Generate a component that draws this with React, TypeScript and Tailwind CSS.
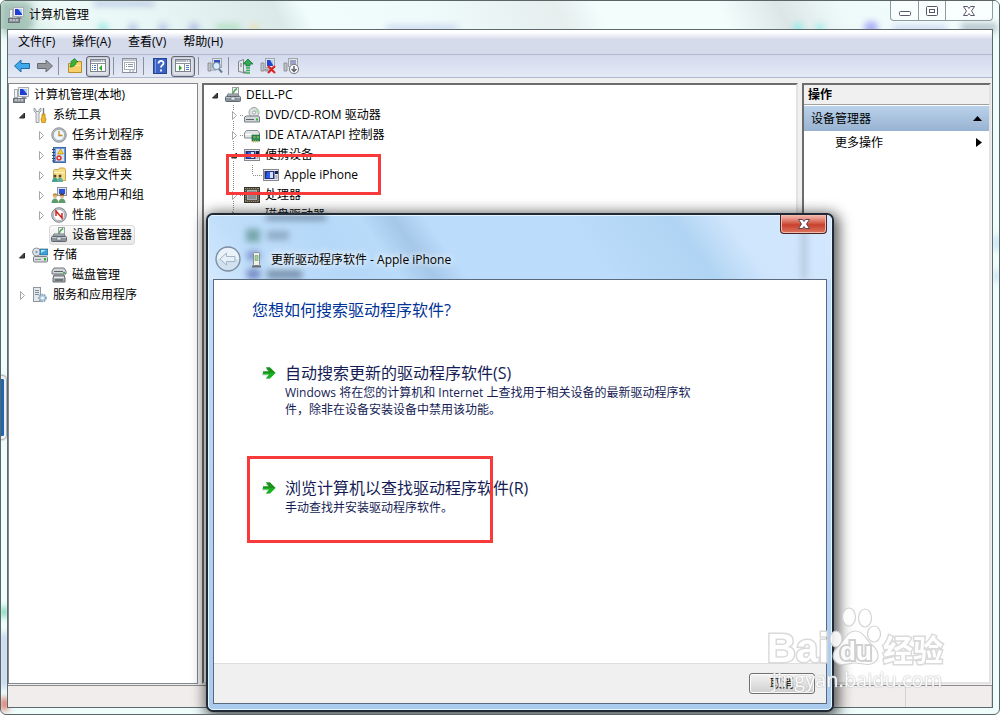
import type { ReactNode } from "react";

type IconProps = { name: string };

function MonitorPc() {
  return (
    <>
      <rect x="5.5" y="0.5" width="10" height="9" fill="#eceef1" stroke="#a9aeb6" />
      <rect x="7" y="2" width="7" height="6" fill="#1f3fd0" />
      <path d="M10 2h4v5z" fill="#a9cbfa" />
      <path d="M9 10h4l1 2H8z" fill="#8b9098" />
      <rect x="1.5" y="2.5" width="3" height="8" fill="#eef0f2" stroke="#a9adb3" />
      <rect x="0.5" y="11.5" width="11" height="4" fill="#8d949b" stroke="#6a7178" />
      <path d="M2 13h2M5 13h2M8 13h2" stroke="#e6eaee" />
    </>
  );
}

function Person({ x, hair }: { x: number; hair: string }) {
  return (
    <>
      <circle cx={x} cy="9" r="2.2" fill="#e9b98a" />
      <path d={`M${x - 2.3} 8.6a2.3 2.3 0 0 1 4.6 0z`} fill={hair} />
      <path d={`M${x - 3.5} 16c0-6 7-6 7 0z`} fill="#5f9a6b" />
    </>
  );
}

function Chassis() {
  return (
    <>
      <rect x="7.5" y="0.5" width="6" height="7" fill="#f2f4f5" stroke="#9aa1a8" />
      <path d="M8 6.5c1-3 2-4 4-5" stroke="#4aa84a" strokeWidth="1.4" fill="none" />
      <path d="M2 9l1-2h10l1 2z" fill="#c5cace" stroke="#6f7780" />
      <rect x="0.5" y="9.5" width="15" height="5" rx="1" fill="#8c959d" stroke="#5f676f" />
      <path d="M1 10.5h14" stroke="#c3c9ce" />
      <rect x="6" y="10" width="4" height="3" fill="#e8ebee" stroke="#676f77" strokeWidth="0.6" />
    </>
  );
}

function WindowPane({ arrow }: { arrow: "left" | "right" }) {
  return (
    <>
      <rect x="0.5" y="1.5" width="15" height="12" fill="#fff" stroke="#7d838c" />
      <path d="M1 3h14" stroke="#b3b9c2" strokeWidth="2" />
      <path d="M11 3h1M13 3h1" stroke="#fff" />
      <path d="M1 5.5h14" stroke="#8a9099" />
      {arrow === "left" ? (
        <>
          <path d="M7.5 6v7" stroke="#8a9099" />
          <path d="M2 7.5h1M4 7.5h2M2 9.5h1M4 9.5h2M2 11.5h1M4 11.5h2" stroke="#4d7bb8" />
          <path d="M12 7v6l-3-3z" fill="#28a428" />
        </>
      ) : (
        <>
          <path d="M9.5 6v7" stroke="#8a9099" />
          <path d="M11 7.5h3M11 9.5h3M11 11.5h3" stroke="#4d7bb8" />
          <path d="M4 7v6l3-3z" fill="#28a428" />
        </>
      )}
    </>
  );
}

const drawings: Record<string, ReactNode> = {
  computer: <MonitorPc />,
  chassis: <Chassis />,
  paneLeft: <WindowPane arrow="left" />,
  paneRight: <WindowPane arrow="right" />,
  portable: (
    <>
      <rect x="0.5" y="2.5" width="15" height="11" fill="#e6e8ec" stroke="#85888f" />
      <rect x="1.5" y="4" width="10" height="8" fill="#28307a" />
      <path d="M4 5h5l-2 6H3z" fill="#2a5cf0" />
      <path d="M7 5h3v6H7z" fill="#cfe2ff" />
      <rect x="12" y="4" width="3" height="3" fill="#17204f" />
      <path d="M12.5 9h2M12.5 11h2" stroke="#7b7e87" />
    </>
  ),
  tools: (
    <>
      <path d="M2 1v3l2 2v9.5h3V6l2-2V1L7 2.5v2H4v-2z" fill="#e4e6e8" stroke="#8b9095" strokeWidth="0.8" />
      <path d="M11.5 1v6" stroke="#777c82" strokeWidth="1.4" />
      <path d="M10 7h3v3l1 2-1 4h-3l-1-4 1-2z" fill="#f1b52b" stroke="#b07c10" strokeWidth="0.7" />
    </>
  ),
  clock: (
    <>
      <circle cx="8" cy="8" r="7.3" fill="#b9bdc2" stroke="#7f858c" strokeWidth="0.8" />
      <circle cx="8" cy="8" r="5.6" fill="#eef6fc" stroke="#8d949b" strokeWidth="0.6" />
      <path d="M8 4v4.5h3.5" stroke="#c8871c" strokeWidth="1.3" fill="none" />
    </>
  ),
  events: (
    <>
      <rect x="2.5" y="0.5" width="12" height="15" fill="#6f97d2" stroke="#3f69a6" />
      <rect x="5" y="2" width="8" height="12" fill="#d5e4f7" />
      <path d="M1 2.5h3M1 5.5h3M1 8.5h3M1 11.5h3M1 14h3" stroke="#30486c" />
      <path d="M9.5 2l3 5h-6z" fill="#fbd02e" stroke="#a8830c" strokeWidth="0.6" />
      <circle cx="8" cy="11" r="2.7" fill="#d83a34" />
      <path d="M7 10l2 2M9 10l-2 2" stroke="#fff" strokeWidth="0.8" />
    </>
  ),
  shared: (
    <>
      <path d="M2.500 3.500l1-1h4l1-1.500h5l1 1.500v11h-12z" fill="#f6dd88" stroke="#c9a74a" />
      <path d="M3 5.5h11" stroke="#fff3c4" />
      <circle cx="4" cy="9" r="1.5" fill="#5e4630" />
      <circle cx="9" cy="9" r="1.5" fill="#5e4630" />
      <path d="M1 15c0-6 6-6 6 0z" fill="#4b9d8e" />
      <path d="M6 15c0-6 6-6 6 0z" fill="#5fae9f" />
    </>
  ),
  users: (
    <>
      <rect x="6.5" y="0.5" width="9" height="8" fill="#dde2ea" stroke="#8c93a0" />
      <rect x="8" y="2" width="6" height="5" fill="#2c52d8" />
      <Person x={4} hair="#c98a34" />
      <Person x={11} hair="#54402c" />
    </>
  ),
  gauge: (
    <>
      <circle cx="8" cy="8" r="7.3" fill="#c9cccf" stroke="#74797f" strokeWidth="0.9" />
      <circle cx="8" cy="8" r="5.5" fill="#fff" stroke="#8a8f95" strokeWidth="0.6" />
      <path d="M5 9V4l6 7V6" stroke="#d2221c" strokeWidth="1.5" fill="none" />
    </>
  ),
  storage: (
    <>
      <circle cx="4.5" cy="5" r="4" fill="#dfe3e8" stroke="#8d9399" />
      <circle cx="4.5" cy="5" r="1.2" fill="#7da0b8" />
      <rect x="8" y="2" width="8" height="6" fill="#3aa3dc" stroke="#257" strokeWidth="0.6" />
      <path d="M9 3h5l-5 3z" fill="#b4e2fa" />
      <rect x="1.5" y="9.5" width="14" height="5.5" rx="1" fill="#d9dcdf" stroke="#7c8288" />
      <path d="M3 12.5h6" stroke="#8b9197" />
      <rect x="12" y="11" width="2" height="2.5" fill="#2eb82e" />
    </>
  ),
  disks: (
    <>
      <path d="M3 1h10l2 3v3H1V4z" fill="#d3d6d9" stroke="#70757a" />
      <path d="M3 4.5h9" stroke="#5d6267" />
      <path d="M3 8h10l1 3v4H2v-4z" fill="#a9aeb3" stroke="#63686d" />
      <path d="M3 10.5h10" stroke="#eee" />
      <rect x="4" y="12" width="8" height="2" fill="#6d7277" />
      <rect x="12" y="5" width="2" height="1.5" fill="#39b54a" />
    </>
  ),
  services: (
    <>
      <rect x="1.5" y="0.5" width="7" height="14" fill="#e4e8ec" stroke="#8e979f" />
      <path d="M3 3.5h4M3 5.5h4M3 7.5h4" stroke="#7b8d9c" />
      <circle cx="10.5" cy="11" r="3.5" fill="#b3cde0" stroke="#7c9db6" strokeWidth="1.6" strokeDasharray="1.5 1" />
      <circle cx="10.5" cy="11" r="1.3" fill="#fff" />
    </>
  ),
  disc: (
    <>
      <circle cx="10" cy="5.5" r="5" fill="#dfe2e5" stroke="#9a9fa4" />
      <path d="M10 5.5l3-4a5 5 0 0 1 2 4z" fill="#b5dcb5" />
      <circle cx="10" cy="5.5" r="1.5" fill="#fff" stroke="#888" strokeWidth="0.7" />
      <path d="M0.500 10l2-1h12l1 1v5h-15z" fill="#d5d8db" stroke="#777d83" />
      <path d="M2 12.5h8" stroke="#5f656b" />
      <rect x="12" y="11.5" width="2" height="2" fill="#2eb82e" />
    </>
  ),
  ide: (
    <>
      <path d="M0.500 6l2-2.500h11l2 2.500v5h-15z" fill="#e2e4e6" stroke="#878c91" />
      <path d="M1 7.5h14" stroke="#fff" />
      <rect x="8" y="8" width="8" height="6" fill="#2f8f55" stroke="#1c5f37" strokeWidth="0.7" />
      <path d="M9.5 10h2M13 10h2M9.5 13.5v2M11.5 13.5v2M13.5 13.5v2" stroke="#d9c36a" />
    </>
  ),
  cpu: (
    <>
      <rect x="0.5" y="0.5" width="15" height="15" fill="#57524a" stroke="#38342f" />
      <path d="M1 1.500h14M1 14.500h14M1.500 1v14M14.500 1v14" stroke="#a08f60" strokeDasharray="1 1" />
      <rect x="3.5" y="3.5" width="9" height="9" fill="#8c8f92" stroke="#aeb0b2" />
    </>
  ),
  none: null,
  back: <path d="M0.500 8L7 2v3.500h8.500v5H7V14z" fill="#3fa9ea" stroke="#1d6ca8" strokeLinejoin="round" />,
  forward: <path d="M15.500 8L9 2v3.500H0.500v5H9V14z" fill="#94989d" stroke="#686c71" strokeLinejoin="round" />,
  folderUp: (
    <>
      <path d="M1.500 5.500h6l1-2h6v11h-13z" fill="#f4cf6a" stroke="#b98f2c" />
      <path d="M2 7.5h12" stroke="#fbe6a5" />
      <path d="M3 9c0-3 2-3 2-5H3.500L7.500 0.500 11 4H9c0 3-2 5-6 5z" fill="#35b535" stroke="#1f7d1f" strokeWidth="0.7" />
    </>
  ),
  properties: (
    <>
      <rect x="0.5" y="0.5" width="14" height="14" fill="#fafbfc" stroke="#8b9097" />
      <path d="M1 2h13" stroke="#c2c8cf" strokeWidth="2" />
      <rect x="2.5" y="4.5" width="10" height="7" fill="#fff" stroke="#a8b0ba" />
      <path d="M4 6.5h1M6 6.5h5M4 8.5h1M6 8.5h5M7 13h2M10 13h2" stroke="#8896a8" />
    </>
  ),
  help: (
    <>
      <rect x="1.5" y="0.5" width="13" height="15" fill="#3c63c4" stroke="#254590" />
      <path d="M3.5 1v14" stroke="#7d9be4" />
      <path d="M6.5 5.5c0-3.500 5.500-3.500 5 0-.2 1.700-2.500 1.800-2.500 4M9 11.500v2" stroke="#fff" strokeWidth="1.8" fill="none" />
    </>
  ),
  scan: (
    <>
      <rect x="5.5" y="0.5" width="9" height="9" fill="#e1e4e8" stroke="#a1a6ad" />
      <rect x="7" y="2" width="6" height="6" fill="#3050c8" />
      <path d="M1 5v8h3V5zM5 12h4" fill="#bfc4c9" stroke="#81878e" strokeWidth="0.8" />
      <circle cx="9.5" cy="8" r="3.5" fill="#d8ecfb" stroke="#7e92a8" strokeWidth="1.2" />
      <path d="M12 11l3 3.5" stroke="#6a7f97" strokeWidth="2" />
    </>
  ),
  update: (
    <>
      <path d="M1.500 3.500l5-2v13l-5-1z" fill="#e6e8ea" stroke="#80868c" />
      <path d="M3 6h2M3 8h2" stroke="#737a81" />
      <path d="M6 14.5h3" stroke="#808080" strokeWidth="2" />
      <path d="M11 1l5 5h-3v2H9V6H6z" fill="#2fab53" stroke="#16743a" strokeWidth="0.8" />
      <path d="M9 10h4M9 12.5h4M9 15h4" stroke="#2fab53" strokeWidth="1.5" />
    </>
  ),
  uninstall: (
    <>
      <rect x="5.5" y="0.5" width="9" height="9" fill="#e1e4e8" stroke="#a1a6ad" />
      <rect x="7" y="2" width="6" height="6" fill="#2444cc" />
      <path d="M10 2h3v5z" fill="#a9cbfa" />
      <path d="M1 5v8h3V5zM5 11h4l1 2H5z" fill="#bfc4c9" stroke="#81878e" strokeWidth="0.8" />
      <path d="M8 8l7 7M15 8l-7 7" stroke="#e01f1f" strokeWidth="2" />
    </>
  ),
  disable: (
    <>
      <rect x="5.5" y="0.5" width="9" height="8" fill="#e1e4e8" stroke="#a1a6ad" />
      <rect x="7" y="2" width="6" height="5" fill="#9ba2c4" />
      <path d="M1 5v8h3V5z" fill="#bfc4c9" stroke="#81878e" strokeWidth="0.8" />
      <circle cx="11" cy="11" r="4.5" fill="#fff" stroke="#7b8086" strokeWidth="1.1" />
      <path d="M11 8v5M8.5 11l2.500 2.500 2.500-2.500" stroke="#5f646a" strokeWidth="1.5" fill="none" />
    </>
  ),
};

function Icon({ name }: IconProps) {
  return (
    <svg className="size-4 shrink-0" viewBox="0 0 16 16" aria-hidden="true">
      {drawings[name]}
    </svg>
  );
}

function Twisty({ open }: { open?: boolean }) {
  return (
    <svg className="mr-0.5 h-5 w-4 shrink-0" viewBox="0 0 16 20" aria-hidden="true">
      {open ? (
        <path d="M10.500 8v5h-5z" fill="#404040" stroke="#262626" strokeLinejoin="round" />
      ) : (
        <path d="M6.500 6.500v8l4-4z" fill="#fff" stroke="#a6a6a6" />
      )}
    </svg>
  );
}

// arrow plus the dotted guide lines of the device tree
function Branch({ open }: { open?: boolean }) {
  return (
    <svg className="h-5 w-[19px] shrink-0" viewBox="0 0 19 20" aria-hidden="true">
      <path d="M8.500 0v5M8.500 16v4M15 10.500h4" stroke="#8c8c8c" strokeDasharray="1 1" />
      {open ? (
        <path d="M11.500 8v5h-5z" fill="#404040" stroke="#262626" strokeLinejoin="round" />
      ) : (
        <path d="M7.500 6.500v8l4-4z" fill="#fff" stroke="#a6a6a6" />
      )}
    </svg>
  );
}

const menus = ["文件(F)", "操作(A)", "查看(V)", "帮助(H)"];

const consoleTree = [
  { label: "任务计划程序", icon: "clock" },
  { label: "事件查看器", icon: "events" },
  { label: "共享文件夹", icon: "shared" },
  { label: "本地用户和组", icon: "users" },
  { label: "性能", icon: "gauge" },
];

function ToolButton({ name, label, pressed }: { name: string; label: string; pressed?: boolean }) {
  return (
    <button
      aria-label={label}
      className={
        pressed
          ? "mr-px flex h-[21px] w-6 items-center justify-center rounded-[3px] border border-[#5f6672] bg-[#dfe2ea] shadow-[inset_0_0_2px_#8a90a0]"
          : "flex h-[21px] w-[23px] items-center justify-center"
      }
    >
      <Icon name={name} />
    </button>
  );
}

function Divider() {
  return <span className="mr-1 ml-0.5 h-[18px] w-px bg-[#8a8f9c]" />;
}

function ConsoleTree() {
  return (
    <nav className="w-[190px] shrink-0 border border-[#828790] bg-white pt-px">
      <ul>
        <li className="flex h-5 items-center gap-[5px] pl-1">
          <Icon name="computer" />
          计算机管理(本地)
        </li>
        <li className="flex h-5 items-center pl-[5px]">
          <Twisty open />
          <span className="mr-[5px]"><Icon name="tools" /></span>
          系统工具
        </li>
        {consoleTree.map((item) => (
          <li key={item.label} className="flex h-5 items-center pl-6">
            <Twisty />
            <span className="mr-[5px]"><Icon name={item.icon} /></span>
            {item.label}
          </li>
        ))}
        <li className="flex h-5 items-center pl-10">
          <span className="flex h-5 items-center gap-[5px] rounded-[3px] border border-[#d9d9d9] bg-linear-to-b from-[#fafafa] to-[#e6e6e6] pr-0.5 pl-px">
            <Icon name="chassis" />
            设备管理器
          </span>
        </li>
        <li className="flex h-5 items-center pl-[5px]">
          <Twisty open />
          <span className="mr-[5px]"><Icon name="storage" /></span>
          存储
        </li>
        <li className="flex h-5 items-center gap-[5px] pl-[42px]">
          <Icon name="disks" />
          磁盘管理
        </li>
        <li className="flex h-5 items-center pl-[5px]">
          <Twisty />
          <span className="mr-[5px]"><Icon name="services" /></span>
          服务和应用程序
        </li>
      </ul>
    </nav>
  );
}

function DeviceRow({ label, icon, open }: { label: string; icon: string; open?: boolean }) {
  return (
    <li className="flex h-5 items-center pl-[21px]">
      <Branch open={open} />
      <span className="mr-[5px]"><Icon name={icon} /></span>
      {label}
    </li>
  );
}

function DeviceTree() {
  return (
    <main className="min-w-0 flex-1 border-2 border-[#6d6d6d] border-r-[#e3e3e3] border-b-[#e3e3e3] bg-white">
      <ul>
        <li className="flex h-5 items-center pl-[3px]">
          <Twisty open />
          <span className="mr-[5px]"><Icon name="chassis" /></span>
          DELL-PC
        </li>
        <DeviceRow label="DVD/CD-ROM 驱动器" icon="disc" />
        <DeviceRow label="IDE ATA/ATAPI 控制器" icon="ide" />
        <DeviceRow label="便携设备" icon="portable" open />
        <li className="flex h-5 items-center pl-[21px]">
          <svg className="h-5 w-[38px] shrink-0" viewBox="0 0 38 20" aria-hidden="true">
            <path d="M8.500 0v20M27.500 0v10M28 10.500h9" stroke="#8c8c8c" strokeDasharray="1 1" fill="none" />
          </svg>
          <span className="mr-[5px]"><Icon name="portable" /></span>
          Apple iPhone
        </li>
        <DeviceRow label="处理器" icon="cpu" />
        <DeviceRow label="磁盘驱动器" icon="none" />
      </ul>
    </main>
  );
}

function ActionsPane() {
  return (
    <aside className="w-[189px] shrink-0 border-2 border-[#6d6d6d] border-r-[#e3e3e3] border-b-[#e3e3e3] bg-white">
      <h2 className="flex h-5 items-center border-b border-[#a0a0a0] bg-[#f0f0f0] pl-1 font-bold">操作</h2>
      <div className="mt-px flex h-[25px] items-center justify-between bg-linear-to-b from-[#b9d1ea] to-[#98b3d2] px-[7px]">
        设备管理器
        <svg className="h-[5px] w-[9px]" viewBox="0 0 9 5" aria-hidden="true"><path d="M4.500 0L9 5H0z" /></svg>
      </div>
      <button className="flex h-[23px] w-full items-center justify-between pr-[7px] pl-[31px]">
        更多操作
        <svg className="h-[9px] w-[6px]" viewBox="0 0 6 9" aria-hidden="true"><path d="M0 0l6 4.500L0 9z" /></svg>
      </button>
    </aside>
  );
}

function CloseCross({ stroke }: { stroke: string }) {
  return (
    <svg className="h-4 w-4" viewBox="0 0 16 16" aria-hidden="true">
      <path d="M2.500 3.500h4L8 5.500l1.500-2h4L10.500 8l3 4.500h-4L8 10.500l-1.500 2h-4l3-4.500z" fill="#fff" stroke={stroke} strokeLinejoin="round" />
    </svg>
  );
}

function CaptionButtons() {
  return (
    <div className="flex h-5 rounded-b-[4px] border border-t-0 border-[#8f9c9e] bg-white/50">
      <button aria-label="最小化" className="flex w-7 items-center justify-center border-r border-[#8f9c9e]">
        <svg className="h-4 w-4" viewBox="0 0 16 16"><rect x="2.5" y="8.5" width="11" height="4" rx="1" fill="#fff" stroke="#56596b" /></svg>
      </button>
      <button aria-label="最大化" className="flex w-[27px] items-center justify-center border-r border-[#8f9c9e]">
        <svg className="h-4 w-4" viewBox="0 0 16 16">
          <rect x="2.5" y="3.5" width="11" height="9" rx="1" fill="#fff" stroke="#56596b" />
          <rect x="5.5" y="6.5" width="5" height="3" fill="#fff" stroke="#56596b" />
        </svg>
      </button>
      <button aria-label="关闭" className="flex w-[46px] items-center justify-center">
        <CloseCross stroke="#56596b" />
      </button>
    </div>
  );
}

function GreenArrow() {
  return (
    <svg className="mt-[3px] h-4 w-4 shrink-0" viewBox="0 0 16 16" aria-hidden="true">
      <path d="M1 8h6L4.500 4h3.500l5 5-5 5H4.500L7 10.500H1z" fill="#d5dad5" />
      <path d="M2 6.500h6L5 2.500h4L14.500 8 9 13.500H5l3-4H2z" fill="#12b31f" />
      <path d="M5 2.500h4L14.500 8H2V6.500h6z" fill="#1c8f1c" />
    </svg>
  );
}

function CommandLink({ title, children }: { title: string; children: ReactNode }) {
  return (
    <button className="flex items-start gap-2 text-left text-[#151c55]">
      <GreenArrow />
      <span>
        <span className="block text-base leading-[22px]">{title}</span>
        <span className="block leading-[17px]">{children}</span>
      </span>
    </button>
  );
}

// blurred shapes of the rows that lie under the glass title bar
function GlassShadows() {
  return (
    <svg className="absolute top-0 left-0 h-[64px] w-full blur-[3px]" aria-hidden="true">
      <g opacity="0.55">
        <rect x="58" y="0" width="60" height="5" fill="#3b4d60" />
        <rect x="38" y="14" width="14" height="13" fill="#3d7a6c" />
        <rect x="59" y="16" width="22" height="9" fill="#6b839b" />
        <rect x="39" y="36" width="13" height="9" fill="#4a5cb0" />
        <rect x="39" y="54" width="13" height="10" fill="#3a4798" />
        <rect x="59" y="55" width="35" height="9" fill="#465a74" />
      </g>
      <rect x="593" y="8" width="6" height="60" fill="#a9bccf" opacity="0.7" />
    </svg>
  );
}

function DriverDialog() {
  return (
    <section
      role="dialog"
      aria-label="更新驱动程序软件"
      className="absolute top-[212px] left-[205px] flex h-[499px] w-[628px] flex-col rounded-[7px] border-2 border-[#1f2a36] bg-[#bcdcfa] px-[5px] pb-1.5 shadow-[2px_3px_14px_3px_rgba(0,0,0,0.65)]"
    >
      <div className="absolute inset-0 rounded-[5px] border border-[#e6f4ff] bg-linear-to-b from-[#c5e0fb] to-[#a9cbee]" />
      <div className="absolute inset-x-px top-px h-16 rounded-t-[4px] bg-[linear-gradient(55deg,#d3e8fd_0%,#c0defa_8%,#b5d8f8_22%,#b9dbfa_29%,#a5c7e8_34%,#bcdcfb_39%,#bbdcfa_60%,#b0d4f3_76%,#cfe5fc_84%,#d3e8fe_100%)]" />
      <GlassShadows />
      <header className="relative flex h-16 shrink-0 items-end pb-[7px]">
        <button aria-label="返回" className="ml-0.5">
          <svg className="size-[26px]" viewBox="0 0 26 26">
            <circle cx="13" cy="13" r="12" fill="#d2e1ef" stroke="#7b8da1" strokeWidth="1.3" />
            <path d="M2 13a11 11 0 0 1 22 0z" fill="#eaf2f9" />
            <path d="M5 13l6.500-6v3.500h8.500v5h-8.500V19z" fill="#e6f0f8" stroke="#a3b5c5" strokeLinejoin="round" />
          </svg>
        </button>
        <svg className="mb-1 ml-[9px] h-4 w-[13px]" viewBox="0 0 13 16" aria-hidden="true">
          <rect x="3.5" y="0.5" width="6" height="13" rx="1" fill="#f0f0ec" stroke="#8b8e8f" />
          <path d="M5 3.5h3v5H5z" fill="#a5cfa0" stroke="#6aa366" strokeWidth="0.6" />
          <path d="M2 14.500h9" stroke="#6b6e70" strokeWidth="2" />
        </svg>
        <h1 className="mb-[3px] ml-2 leading-[18px] [text-shadow:0_0_6px_#fff,0_0_8px_#fff]">更新驱动程序软件 - Apple iPhone</h1>
        <button
          aria-label="关闭"
          className="absolute top-0 right-0 flex h-[19px] w-[47px] items-center justify-center rounded-b-[4px] border border-t-0 border-[#4f2222] bg-linear-to-b from-[#eeaaa0] from-10% via-[#c8402c] via-55% to-[#dc7660] shadow-[inset_0_0_0_1px_#f0bcb0]"
        >
          <CloseCross stroke="#5a4550" />
        </button>
      </header>
      <div className="relative flex flex-1 flex-col border border-[#5b6b7d] bg-white">
        <div className="flex-1 pt-[19px] pl-[38px]">
          <h2 className="text-base leading-[22px] text-[#003399]">您想如何搜索驱动程序软件?</h2>
          <div className="mt-[41px] flex flex-col items-start gap-[59px] pl-[9px]">
            <CommandLink title="自动搜索更新的驱动程序软件(S)">
              Windows 将在您的计算机和 Internet 上查找用于相关设备的最新驱动程序软
              <br />
              件，除非在设备安装设备中禁用该功能。
            </CommandLink>
            <CommandLink title="浏览计算机以查找驱动程序软件(R)">手动查找并安装驱动程序软件。</CommandLink>
          </div>
        </div>
        <footer className="flex h-10 items-center justify-end border-t border-[#dfdfdf] bg-[#f0f0f0] pr-[11px]">
          <button className="h-[21px] w-[66px] rounded-[3px] border border-[#707070] bg-linear-to-b from-[#f3f3f3] to-[#cfcfcf] text-center shadow-[inset_0_0_0_1px_#fcfcfc]">
            取消
          </button>
        </footer>
      </div>
    </section>
  );
}

// desktop colours that show through the window frame
function FrameGlow() {
  return (
    <svg className="absolute inset-0 h-full w-full blur-[3px]" aria-hidden="true">
      <circle cx="14" cy="16" r="20" fill="#7fa596" opacity="0.55" />
      <rect x="93" y="0" width="60" height="5" fill="#9aa7d8" opacity="0.6" />
      <circle cx="102" cy="27" r="5" fill="#7fe3e0" opacity="0.7" />
      <circle cx="132" cy="27" r="5" fill="#a9b6e6" opacity="0.7" />
      <circle cx="162" cy="27" r="5" fill="#a9b6e6" opacity="0.7" />
      <circle cx="193" cy="27" r="5" fill="#9aa6dd" opacity="0.7" />
      <rect x="215" y="23" width="24" height="7" fill="#9fdcb4" opacity="0.7" />
      <circle cx="253" cy="27" r="4" fill="#ecdf9c" opacity="0.8" />
      <rect x="385" y="24" width="72" height="6" fill="#b7c5ea" opacity="0.6" />
      <circle cx="797" cy="27" r="5" fill="#72eee8" opacity="0.7" />
      <circle cx="819" cy="27" r="4" fill="#72eee8" opacity="0.7" />
      <circle cx="870" cy="27" r="7" fill="#8d92f2" opacity="0.7" />
      <rect x="892" y="25" width="54" height="5" fill="#b3bfee" opacity="0.7" />
      <rect x="960" y="22" width="36" height="9" fill="#8fa3ad" opacity="0.6" />
      <rect x="0" y="606" width="6" height="10" fill="#3fbf94" opacity="0.8" />
      <rect x="0" y="632" width="6" height="55" fill="#a9bbe6" opacity="0.8" />
      <rect x="0" y="697" width="7" height="12" fill="#d6503c" opacity="0.9" />
      <rect x="993" y="235" width="6" height="14" fill="#b9dcf0" />
      <rect x="993" y="270" width="6" height="10" fill="#b9dcf0" />
    </svg>
  );
}

function Watermark() {
  return (
    <div className="pointer-events-none absolute top-[605px] left-[766px] h-[86px] w-[182px] text-white opacity-90">
      <svg className="absolute top-0 left-[60px] h-16 w-[60px]" viewBox="0 0 60 64" aria-hidden="true">
        <g fill="#fff" stroke="#cfcfcf" strokeWidth="1.2">
          <ellipse cx="9" cy="33" rx="6" ry="8" />
          <ellipse cx="22" cy="11" rx="6.5" ry="9" />
          <ellipse cx="38" cy="12" rx="6.5" ry="9" />
          <ellipse cx="47" cy="28" rx="6.5" ry="8" />
          <path d="M28 25c8 0 11 8 16 13 8 6 9 14 4 18-6 5-13 1-20 1s-14 4-19-1c-5-4-3-11 2-15 6-6 9-16 17-16z" />
        </g>
      </svg>
      <span className="absolute top-[20px] left-0 text-[40px] leading-[44px] font-bold [-webkit-text-stroke:3px_#d6d6d6] [paint-order:stroke_fill] [font-family:'Liberation_Sans',sans-serif]">Bai</span>
      <span className="absolute top-[30px] left-[73px] text-[26px] leading-[30px] font-bold [-webkit-text-stroke:4px_#cdcdcd] [paint-order:stroke_fill] [font-family:'Liberation_Sans',sans-serif]">du</span>
      <span className="absolute top-[22px] left-[116px] text-[30px] leading-[44px] font-bold [-webkit-text-stroke:3px_#d6d6d6] [paint-order:stroke_fill]">经验</span>
      <span className="absolute top-[62px] left-[5px] text-[20px] leading-6 font-medium [text-shadow:0_0_2px_#b0b0b0,0_0_1px_#b8b8b8]">jingyan.baidu.com</span>
    </div>
  );
}

export default function App() {
  return (
    <div className="relative flex min-h-screen flex-col overflow-hidden rounded-[6px] border border-[#5b6566] bg-[#eefcfb] px-1.5 pb-1.5 text-xs text-black [font-family:'Open_Sans','Noto_Sans_CJK_SC',sans-serif]">
      <div className="absolute inset-x-0 top-0 h-7 bg-[linear-gradient(65deg,#c9e2da_0%,#ecfaf8_6%,#e9f7f6_14%,#dbe9e9_28%,#f1fdfd_31%,#effbfb_42%,#e6eeee_56%,#f2fdfc_60%,#f2fdfc_72%,#dde6e6_78%,#eefafa_84%,#f4fdfd_100%)]" />
      <FrameGlow />
      <div className="absolute top-[375px] left-0 h-[63px] w-[5px] rounded-r-[4px] border-y-3 border-r-2 border-[#f1eff6] bg-[#1f66b0] shadow-[0_0_2px_1px_#999]" />
      <header className="relative flex h-7 shrink-0 justify-between">
        <div className="flex items-center gap-[5px] pl-px">
          <Icon name="computer" />
          <h1 className="[text-shadow:0_0_6px_#fff]">计算机管理</h1>
        </div>
        <CaptionButtons />
      </header>
      <div className="relative flex flex-1 flex-col border border-[#5c6a6e] bg-[#f0f0f0]">
        <div className="flex h-[25px] items-center gap-[17px] border-b border-[#b4b9cc] bg-linear-to-b from-white from-10% via-[#d6dbec] via-40% to-[#d5daeb] pl-2.5">
          {menus.map((menu) => (
            <button key={menu}>{menu}</button>
          ))}
        </div>
        <div className="flex h-[23px] items-center border-b border-[#b0b7d0] bg-linear-to-b from-[#d3daed] to-[#e4e9f5] pl-0.5">
          <ToolButton name="back" label="后退" />
          <ToolButton name="forward" label="前进" />
          <Divider />
          <ToolButton name="folderUp" label="上移一级" />
          <ToolButton name="paneLeft" label="显示控制台树" pressed />
          <Divider />
          <ToolButton name="properties" label="属性" />
          <Divider />
          <ToolButton name="help" label="帮助主题" />
          <ToolButton name="paneRight" label="显示操作窗格" pressed />
          <Divider />
          <ToolButton name="scan" label="扫描硬件改动" />
          <Divider />
          <ToolButton name="update" label="更新驱动" />
          <ToolButton name="uninstall" label="卸载" />
          <ToolButton name="disable" label="禁用" />
        </div>
        <div className="mt-[5px] flex flex-1 gap-1 pr-px">
          <ConsoleTree />
          <DeviceTree />
          <ActionsPane />
        </div>
        <footer className="mt-px flex h-[22px] justify-end border-t border-[#8b8b8b] bg-[#f1edec]">
          <span className="w-[87px] border-x border-[#d5d1d0]" />
        </footer>
      </div>
      <DriverDialog />
      <div className="pointer-events-none absolute top-[153px] left-[225px] h-[41px] w-[155px] border-3 border-[#f93a3a]" />
      <div className="pointer-events-none absolute top-[455px] left-[246px] h-[87px] w-[246px] border-3 border-[#f93a3a]" />
      <Watermark />
    </div>
  );
}
